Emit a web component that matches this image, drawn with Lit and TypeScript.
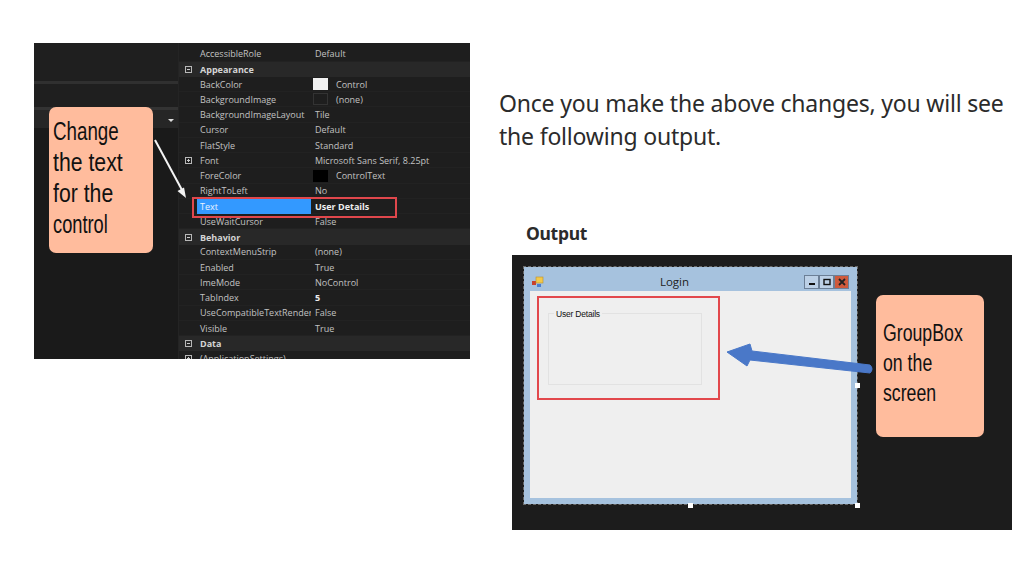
import { LitElement, html, css, svg } from "lit";
import { customElement } from "lit/decorators.js";

type Row = { n: string; v?: string; cat?: boolean; plus?: boolean; swatch?: string; sel?: boolean; bold?: boolean };

const ROWS: Row[] = [
  { n: "AccessibleRole", v: "Default" },
  { n: "Appearance", cat: true },
  { n: "BackColor", v: "Control", swatch: "#f1f1f1" },
  { n: "BackgroundImage", v: "(none)", swatch: "#1e1e1e" },
  { n: "BackgroundImageLayout", v: "Tile" },
  { n: "Cursor", v: "Default" },
  { n: "FlatStyle", v: "Standard" },
  { n: "Font", v: "Microsoft Sans Serif, 8.25pt", plus: true },
  { n: "ForeColor", v: "ControlText", swatch: "#000" },
  { n: "RightToLeft", v: "No" },
  { n: "Text", v: "User Details", sel: true, bold: true },
  { n: "UseWaitCursor", v: "False" },
  { n: "Behavior", cat: true },
  { n: "ContextMenuStrip", v: "(none)" },
  { n: "Enabled", v: "True" },
  { n: "ImeMode", v: "NoControl" },
  { n: "TabIndex", v: "5", bold: true },
  { n: "UseCompatibleTextRender", v: "False" },
  { n: "Visible", v: "True" },
  { n: "Data", cat: true },
  { n: "(ApplicationSettings)", plus: true },
];

@customElement("app-root")
export class AppRoot extends LitElement {
  static styles = css`
    :host { display: block; width: 1024px; height: 576px; background: #fff; overflow: hidden; font-family: "Noto Sans", sans-serif; }
    .page { display: flex; gap: 29px; padding: 43px 0 0 34px; box-sizing: border-box; height: 576px; }

    .props { position: relative; flex: none; width: 436px; height: 316px; background: #1c1c1c; display: flex; overflow: hidden; }
    .side { flex: none; width: 144px; display: flex; flex-direction: column; background: #1f1f1f; }
    .side .a { height: 38px; border-bottom: 3px solid #303030; }
    .side .b { height: 23px; }
    .side .c { height: 18px; background: #262626; border-top: 3px solid #333; display: flex; justify-content: flex-end; align-items: center; padding-right: 2px; }
    .tri { width: 0; height: 0; border: 3px solid transparent; border-top: 3px solid #ddd; border-bottom: 0; margin-right: 2px; margin-top: 3px; }
    .side .d { flex: 1; background: #1a1a1a; }
    .grid { flex: 1; background: #1e1e1e; padding-top: 3.4px; border-left: 1px solid #242424; }
    .row { height: 15.25px; display: flex; align-items: center; font: 9px/15px "Open Sans", sans-serif; color: #c2c2c2; border-bottom: 1px solid #222; box-sizing: border-box; white-space: nowrap; }
    .row.cat { background: #282828; font-weight: 700; color: #d4d4d4; border-bottom: 0; }
    .gut { flex: none; width: 18px; display: flex; justify-content: center; align-items: center; }
    .box { width: 7px; height: 7px; border: 1px solid #b8b8b8; position: relative; box-sizing: border-box; }
    .box::before { content: ""; position: absolute; left: 1px; right: 1px; top: 2px; height: 1px; background: #ccc; }
    .box.plus::after { content: ""; position: absolute; top: 1px; bottom: 1px; left: 2px; width: 1px; background: #ccc; }
    .name { flex: none; width: 114px; overflow: hidden; padding-left: 3px; box-sizing: border-box; height: 15px; }
    .row.sel .name { background: #3399ff; color: #eaf4ff; }
    .val { padding-left: 4px; display: flex; align-items: center; }
    .row.bold .val { font-weight: 700; color: #eee; }
    .sw { flex: none; width: 15px; height: 12px; margin: 0 8px 0 -2px; }
    .sw.dark { border: 1px solid #333; box-sizing: border-box; }
    .redbox { position: absolute; left: 158px; top: 154px; width: 205px; height: 21px; box-sizing: border-box; border: 2px solid #e0474c; }

    .note { position: absolute; background: #ffbc9d; border-radius: 7px; box-sizing: border-box; color: #111; font-family: "Liberation Sans Narrow", "Liberation Sans", sans-serif; font-weight: 400; }
    .note div { transform-origin: left center; white-space: nowrap; }
    .n1 { left: 15px; top: 64px; width: 104px; height: 146px; padding: 9px 0 0 4px; font-size: 25px; line-height: 31px; }
    .n1 div:nth-child(1) { transform: scaleX(.75); }
    .n1 div:nth-child(2) { transform: scaleX(.85); }
    .n1 div:nth-child(3) { transform: scaleX(.85); }
    .n1 div:nth-child(4) { transform: scaleX(.73); }
    .n2 { left: 364px; top: 40px; width: 108px; height: 142px; padding: 23px 0 0 7px; font-size: 23px; line-height: 30px; }
    .n2 div { transform: scaleX(.77); }
    .over { position: absolute; left: 0; top: 0; pointer-events: none; }

    .right { flex: none; width: 521px; display: flex; flex-direction: column; }
    h1 { margin: 44px 0 0; font: 400 23px/33px "Noto Sans", sans-serif; color: #2b2b2b; white-space: nowrap; letter-spacing: -.2px; }
    .label { margin: 68px 0 0 27px; font: 700 17.5px/24px "Noto Sans", sans-serif; color: #2b2b2b; letter-spacing: -.3px; }
    .stage { position: relative; margin: 10px 0 0 13px; width: 500px; height: 275px; background: #1c1c1c; padding: 12px; box-sizing: border-box; }
    .win { width: 333px; height: 237px; box-sizing: border-box; outline: 1px dashed #6a6a6a; background: #a6c2de; padding: 0 6px 6px; display: flex; flex-direction: column; }
    .title { flex: none; height: 24px; margin: 0 -6px; padding: 5px 8px 0 8px; box-sizing: border-box; display: grid; grid-template-columns: 1fr auto 1fr; align-items: center; font: 400 11.5px "Open Sans", sans-serif; color: #222; }
    .ttl { padding-right: 32px; }
    .btns { display: flex; justify-content: flex-end; gap: 0; align-items: center; }
    .btn { width: 15px; height: 14px; box-sizing: border-box; border: 1px solid #6c7f96; background: #bcd0e6; display: flex; align-items: center; justify-content: center; }
    .btn.x { background: #cf5a3c; }
    .client { flex: 1; background: #efefef; padding: 5px 0 0 7px; }
    .red { width: 183px; height: 104px; box-sizing: border-box; border: 2.5px solid #e2484c; padding: 15px 0 0 9px; }
    .gb { position: relative; width: 154px; height: 72px; box-sizing: border-box; border: 1px solid #e2e2e2; }
    .gb span { position: absolute; left: 5px; top: -5px; padding: 0 2px; background: #efefef; font: 8.5px/11px "Liberation Sans", sans-serif; color: #111; letter-spacing: -.2px; }
    .h { position: absolute; width: 5px; height: 5px; background: #fff; }
  `;

  private row(r: Row) {
    const cls = `row${r.cat ? " cat" : ""}${r.sel ? " sel" : ""}${r.bold ? " bold" : ""}`;
    return html`<div class=${cls}>
      <div class="gut">${r.cat || r.plus ? html`<div class="box ${r.plus ? "plus" : ""}"></div>` : ""}</div>
      <div class="name">${r.n}</div>
      ${r.v ? html`<div class="val">${r.swatch ? html`<div class="sw ${r.swatch === "#1e1e1e" ? "dark" : ""}" style="background:${r.swatch}"></div>` : ""}${r.v}</div>` : ""}
    </div>`;
  }

  render() {
    return html`<div class="page">
      <section class="props">
        <div class="side"><div class="a"></div><div class="b"></div><div class="c"><div class="tri"></div></div><div class="d"></div></div>
        <div class="grid">${ROWS.map((r) => this.row(r))}</div>
        <div class="redbox"></div>
        <div class="note n1"><div>Change</div><div>the text</div><div>for the</div><div>control</div></div>
        <svg class="over" width="436" height="316" viewBox="0 0 436 316">
          ${svg`<path d="M121 97 L148 147" stroke="#f4f4f4" stroke-width="2" fill="none"/><path d="M152 155 L143.5 148 L150 144.5 Z" fill="#f4f4f4"/>`}
        </svg>
      </section>
      <section class="right">
        <h1>Once you make the above changes, you will see<br />the following output.</h1>
        <div class="label">Output</div>
        <div class="stage">
          <div class="win">
            <div class="title">
              <svg width="12" height="12" viewBox="0 0 12 12"><rect x="0" y="5" width="4" height="4" fill="#c8402c"/><rect x="4" y="1" width="7" height="6" fill="#f2c84a" stroke="#b8902c" stroke-width=".6"/><rect x="5" y="8" width="4" height="3" fill="#4a7fd0"/></svg>
              <div class="ttl">Login</div>
              <div class="btns">
                <div class="btn"><svg width="8" height="8" viewBox="0 0 8 8"><rect x="1" y="5" width="6" height="2" fill="#111"/></svg></div>
                <div class="btn"><svg width="8" height="8" viewBox="0 0 8 8"><rect x="1" y="1.5" width="6" height="5" fill="none" stroke="#111" stroke-width="1.4"/></svg></div>
                <div class="btn x"><svg width="8" height="8" viewBox="0 0 8 8"><path d="M1 1 L7 7 M7 1 L1 7" stroke="#222" stroke-width="1.8"/></svg></div>
              </div>
            </div>
            <div class="client">
              <div class="red"><div class="gb"><span>User Details</span></div></div>
            </div>
          </div>
          <div class="h" style="left:176px;top:248px"></div>
          <div class="h" style="left:343px;top:248px"></div>
          <div class="h" style="left:343px;top:128px"></div>
          <svg class="over" width="500" height="275" viewBox="0 0 500 275">
            ${svg`<path d="M358 110 L240 96 L238 89 L215 97 L235 111 L238 105 L358 118 Q362 114 358 110 Z" fill="#4a78c8" stroke="#4a78c8" stroke-width="1" stroke-linejoin="round"/>`}
          </svg>
          <div class="note n2"><div>GroupBox</div><div>on the</div><div>screen</div></div>
        </div>
      </section>
    </div>`;
  }
}
